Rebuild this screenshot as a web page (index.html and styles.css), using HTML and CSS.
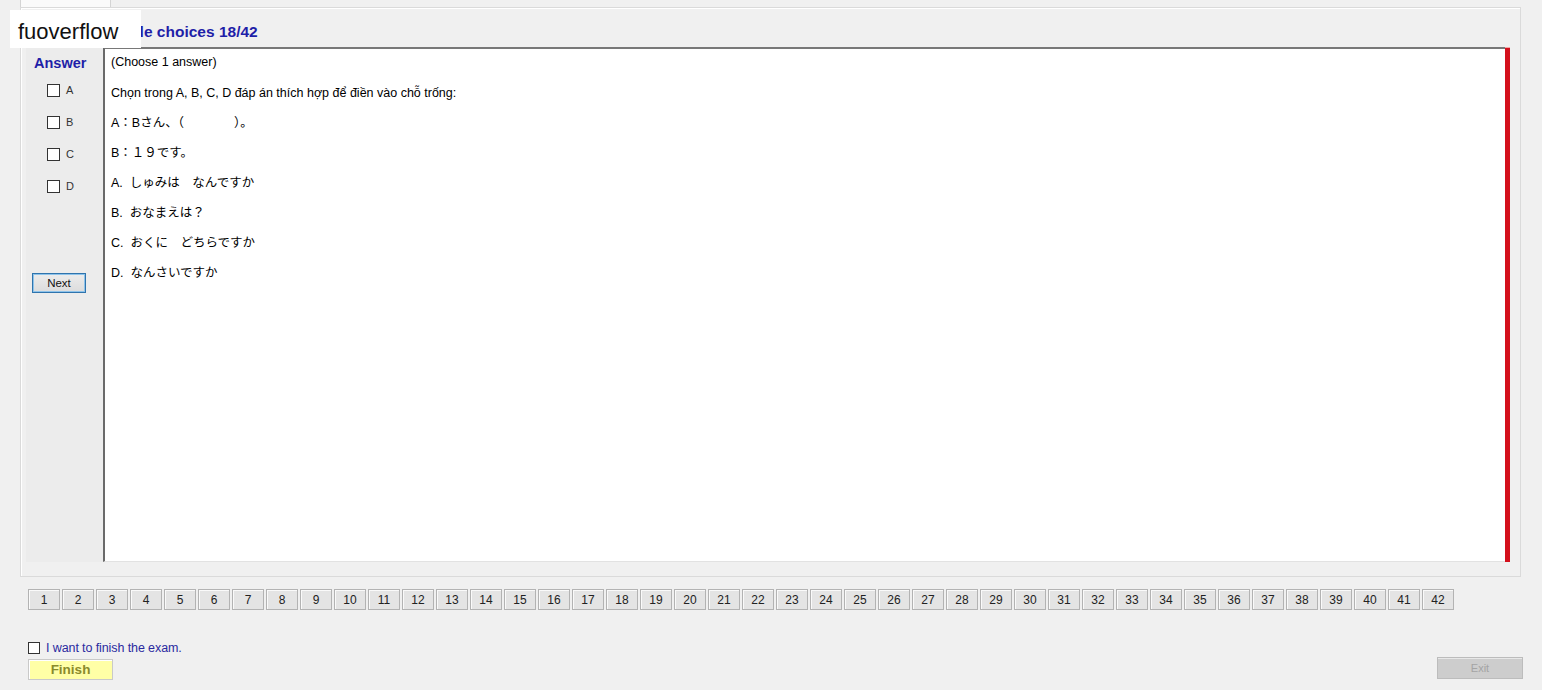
FILE: index.html
```html
<!DOCTYPE html>
<html lang="vi">
<head>
    <meta charset="UTF-8">
    <meta name="viewport" content="width=device-width, initial-scale=1.0">
    <title>Multiple choices</title>
    <link rel="stylesheet" href="styles.css">
</head>
<body>
    <div class="watermark">fuoverflow</div>

    <div class="tabs">
        <div class="tab"></div>
    </div>

    <div class="panel">
        <div class="title">Multiple choices 18/42</div>
        <div class="exam">
            <div class="answers">
                <div class="answer-title">Answer</div>
                <label class="answer-option"><span class="box"></span>A</label>
                <label class="answer-option"><span class="box"></span>B</label>
                <label class="answer-option"><span class="box"></span>C</label>
                <label class="answer-option"><span class="box"></span>D</label>
                <button class="next">Next</button>
            </div>
            <div class="question">
                <p>(Choose 1 answer)</p>
                <p>Chọn trong A, B, C, D đáp án thích hợp để điền vào chỗ trống:</p>
                <p class="jp">A：Bさん、（　　　　）。</p>
                <p class="jp">B：１９です。</p>
                <p class="jp">A.&nbsp; しゅみは　なんですか</p>
                <p class="jp">B.&nbsp; おなまえは？</p>
                <p class="jp">C.&nbsp; おくに　どちらですか</p>
                <p class="jp">D.&nbsp; なんさいですか</p>
            </div>
            <div class="timer-bar"></div>
        </div>
    </div>

    <div class="pages" id="pages"></div>

    <div class="footer">
        <div class="finish-block">
            <label class="finish-check"><span class="box"></span>I want to finish the exam.</label>
            <button class="finish">Finish</button>
        </div>
        <button class="exit" disabled>Exit</button>
    </div>

    <script>
        const pages = document.getElementById('pages');
        for (let i = 1; i <= 42; i++) {
            const btn = document.createElement('button');
            btn.className = 'page-btn';
            btn.textContent = i;
            pages.appendChild(btn);
        }
    </script>
</body>
</html>
```

FILE: styles.css
```css
* {
    box-sizing: border-box;
    margin: 0;
    padding: 0;
}

body {
    background-color: #f0f0f0;
    font-family: "Liberation Sans", Arial, "Noto Sans CJK JP", sans-serif;
    font-size: 12.5px;
    color: #000;
    width: 1542px;
    height: 690px;
    overflow: hidden;
}

.watermark {
    position: absolute;
    left: 10px;
    top: 10px;
    width: 131px;
    height: 38px;
    background-color: #fff;
    font-family: "Liberation Sans", Arial, sans-serif;
    font-size: 22px;
    line-height: 32px;
    padding: 6px 0 0 8px;
    color: #111;
    z-index: 2;
}

.tabs {
    height: 7px;
    padding-left: 20px;
}

.tab {
    width: 91px;
    height: 7px;
    background-color: #fafafa;
    border-left: 1px solid #d4d4d4;
    border-right: 1px solid #d4d4d4;
}

.panel {
    margin-left: 20px;
    width: 1501px;
    height: 570px;
    border: 1px solid #dadada;
    box-shadow: inset 1px 1px 0 #fff;
    background-color: #f0f0f0;
}

.title {
    height: 39px;
    padding-left: 73px;
    padding-top: 15px;
    font-size: 15.5px;
    font-weight: bold;
    color: #1f1fa8;
    line-height: 18px;
}

.exam {
    display: flex;
    margin-left: 5px;
    height: 515px;
}

.answers {
    width: 77px;
    background-color: #ececec;
    padding-top: 7px;
    display: flex;
    flex-direction: column;
}

.answer-title {
    font-size: 14.5px;
    font-weight: bold;
    color: #1f1fa8;
    line-height: 18px;
    padding-left: 8px;
    margin-bottom: 2px;
}

.answer-option {
    display: flex;
    align-items: center;
    height: 32px;
    padding-left: 21px;
    font-size: 11px;
    color: #333;
}

.box {
    display: inline-block;
    width: 13px;
    height: 13px;
    border: 1px solid #333;
    background-color: #fff;
    margin-right: 6px;
}

.next {
    margin-top: 71px;
    margin-left: 6px;
    width: 54px;
    height: 20px;
    border: 1px solid #2f74ad;
    box-shadow: inset 0 0 0 1px #8ec3ea;
    background: linear-gradient(#ececec, #dcdcdc);
    font-family: "Liberation Sans", Arial, sans-serif;
    font-size: 11.5px;
    color: #111;
}

.question {
    width: 1402px;
    background-color: #fff;
    border-top: 2px solid #787878;
    border-left: 2px solid #6a6a6a;
    border-bottom: 1px solid #e2e2e2;
    padding: 5px 0 0 6px;
}

.question p {
    line-height: 17px;
    margin-bottom: 13px;
}

.question p:first-child {
    margin-bottom: 14px;
}

.question .jp {
    font-family: "Liberation Sans", Arial, "Noto Sans CJK JP", sans-serif;
    font-size: 12.5px;
}

.timer-bar {
    width: 5px;
    background-color: #d4101c;
    border-top: 1px solid #f3a6a6;
}

.pages {
    display: flex;
    gap: 2px;
    margin-left: 28px;
    margin-top: 12px;
}

.page-btn {
    width: 32px;
    height: 21px;
    border: 1px solid #b3b3b3;
    box-shadow: inset 1px 1px 0 #fafafa;
    background-color: #e4e4e4;
    font-family: "Liberation Sans", Arial, sans-serif;
    font-size: 12px;
    color: #222;
}

.footer {
    display: flex;
    justify-content: space-between;
    align-items: flex-end;
    margin-top: 31px;
    padding: 0 19px 0 28px;
}

.finish-check {
    display: flex;
    align-items: center;
    color: #2a2aa0;
    font-size: 12.5px;
    letter-spacing: -0.1px;
    height: 14px;
    margin-bottom: 4px;
}

.finish-check .box {
    width: 12px;
    height: 12px;
}

.finish {
    width: 85px;
    height: 21px;
    border: 1px solid #c9c9c9;
    box-shadow: inset 1px 1px 0 #fff;
    background-color: #ffffa6;
    font-family: "Liberation Sans", Arial, sans-serif;
    font-size: 13.5px;
    font-weight: bold;
    color: #8a8a2c;
}

.exit {
    width: 86px;
    height: 22px;
    border: 1px solid #bcbcbc;
    box-shadow: inset 0 1px 0 #e8e8e8;
    background-color: #cdcdcd;
    font-family: "Liberation Sans", Arial, sans-serif;
    font-size: 11px;
    color: #a4a4a4;
    margin-bottom: 1px;
}
```
